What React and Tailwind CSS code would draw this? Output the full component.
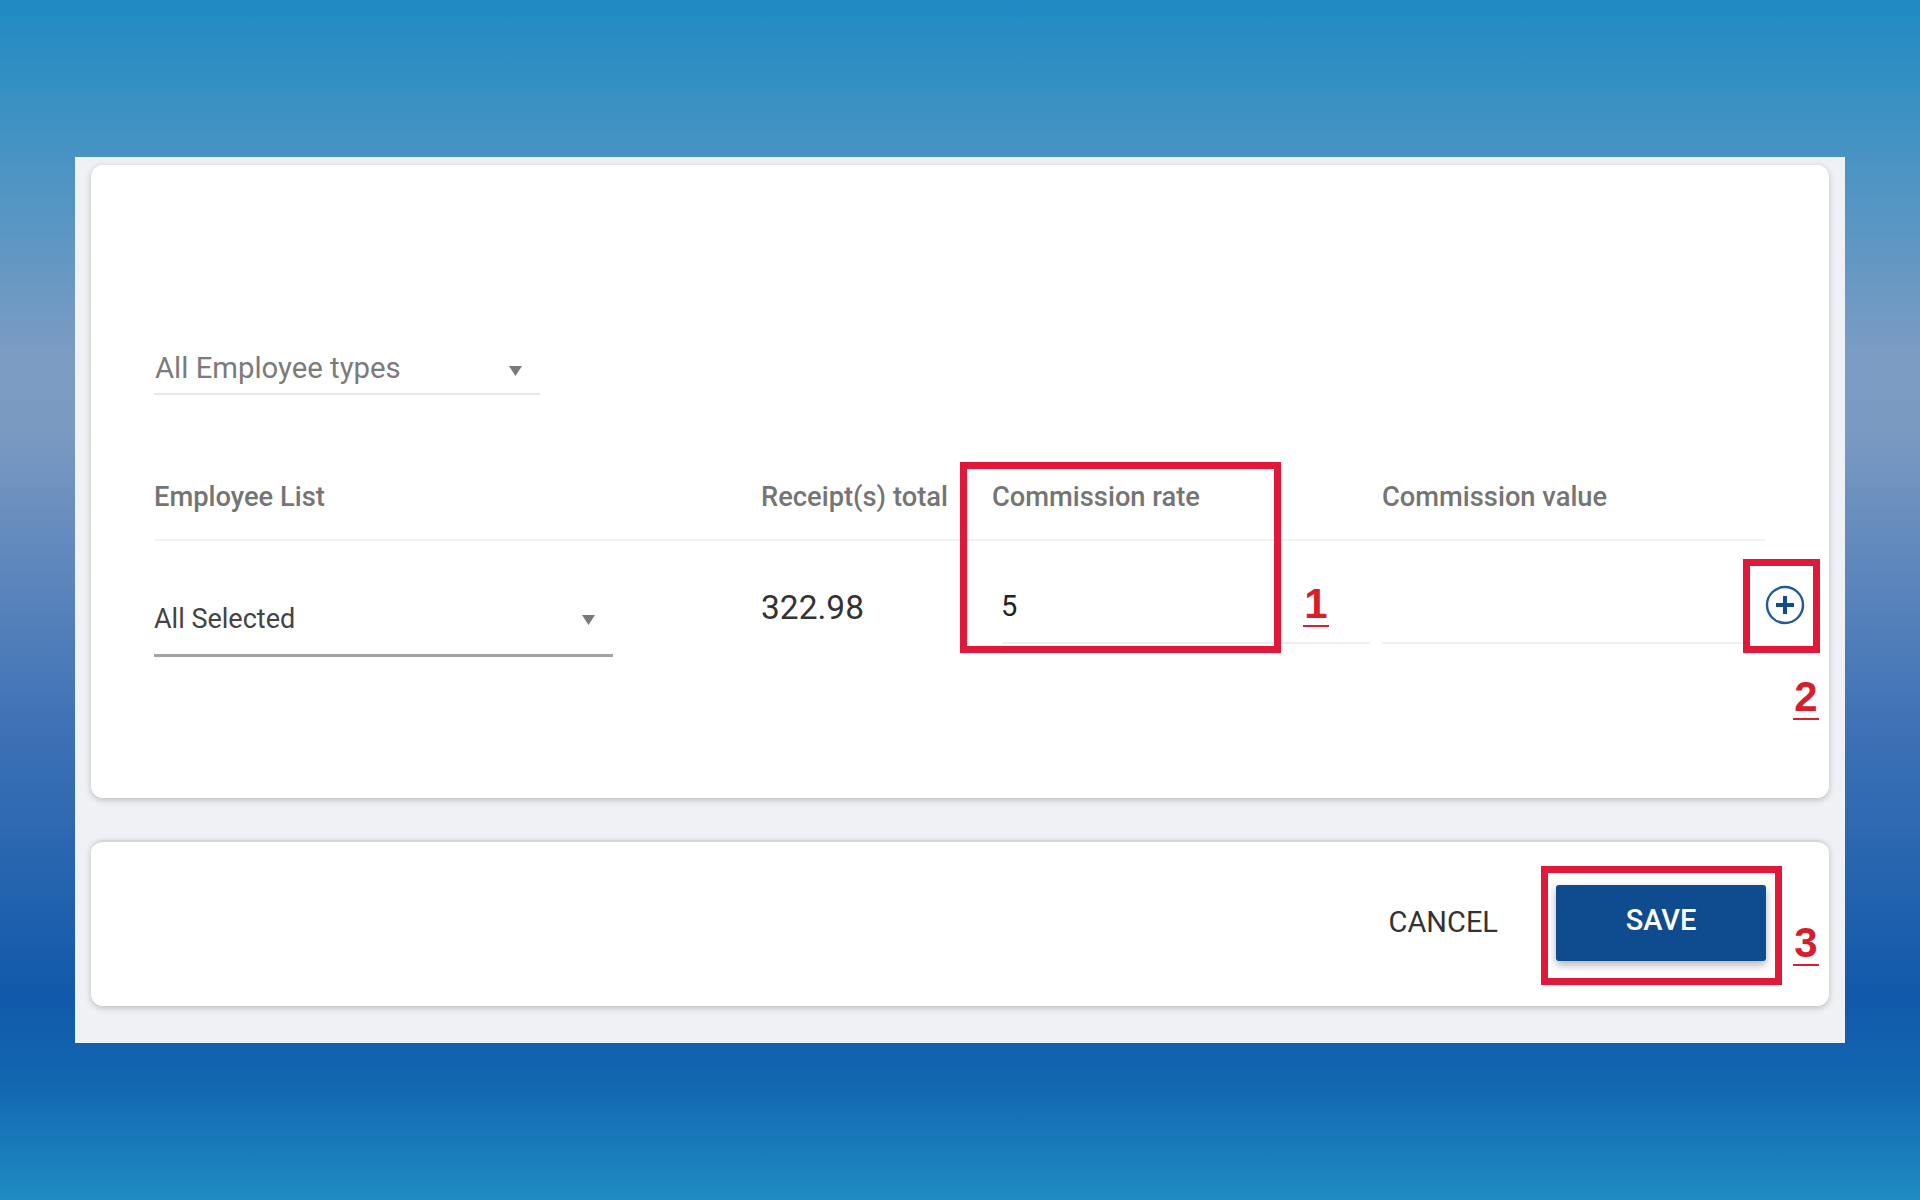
const redBox = 'absolute border-[7px] border-[#e0183a] pointer-events-none';

function Caret({ className }) {
  return (
    <svg width="13" height="10" viewBox="0 0 13 10" className={className}>
      <path d="M0 0h13L6.5 10z" fill="#7a7a7a" />
    </svg>
  );
}

function PlusCircle({ className }) {
  return (
    <svg width="40" height="40" viewBox="0 0 40 40" className={className}>
      <circle cx="20" cy="20" r="18" fill="none" stroke="#1f5a99" strokeWidth="2.4" />
      <path d="M20 11v18M11 20h18" fill="none" stroke="#0f4c8f" strokeWidth="4" />
    </svg>
  );
}

function Marker({ children, className }) {
  return (
    <span className={`absolute w-[26px] border-b-2 border-[#d8202f] text-center text-[42px] leading-[42px] font-bold text-[#d4202c] font-['Liberation_Sans',sans-serif] ${className}`}>
      {children}
    </span>
  );
}

export default function App() {
  return (
    <div className="relative flex h-[1200px] w-[1920px] items-center justify-center overflow-hidden bg-[linear-gradient(180deg,#1f8ac4_0%,#4593c3_12%,#7d9cc3_30%,#7a9ac2_36%,#3f72b6_60%,#1159aa_83%,#1266b0_90%,#1f8bc3_100%)] font-['Roboto',sans-serif]">
      <div className="relative flex h-[886px] w-[1770px] flex-col gap-[42px] bg-[#f0f1f5] px-4 pt-2">
        <div className="h-[633px] rounded-xl bg-white pl-[63px] shadow-[0_2px_6px_rgba(0,0,0,0.22)]">
          <div className="mt-[186px] flex h-[44px] w-[386px] items-center justify-between border-b-2 border-[#e6e7ea] pl-px pr-[18px] pb-1.5">
            <span className="text-[29.3px] text-[#7b7b7b]">All Employee types</span>
            <Caret className="mt-1" />
          </div>

          <div className="mt-[75px] flex h-[71px] w-[1612px] items-center border-b-2 border-[#f1f2f4] pb-[14px] text-[27.3px] font-medium text-[#757575]">
            <span className="w-[607px]">Employee List</span>
            <span className="w-[231px] whitespace-nowrap">Receipt(s) total</span>
            <span className="w-[390px]">Commission rate</span>
            <span>Commission value</span>
          </div>

          <div className="flex h-[116px] w-[1660px] items-start">
            <div className="flex h-[116px] w-[459px] items-center justify-between border-b-[3px] border-[#a3a3a3] pt-[43px] pr-[18px] text-[27px] text-[#444444]">
              <span>All Selected</span>
              <Caret className="mt-0.5" />
            </div>
            <span className="ml-[148px] mt-[45px] w-[241px] text-[33.5px] leading-[44px] text-[#333333]">322.98</span>
            <div className="flex h-[103px] w-[368px] items-center border-b-2 border-[#eeeff1] pt-[31px] text-[29px] text-[#222222]">
              <span className="-ml-px">5</span>
            </div>
            <div className="ml-3 h-[103px] w-[363px] border-b-2 border-[#eeeff1]"></div>
            <PlusCircle className="ml-5 mt-[44px] shrink-0" />
          </div>
        </div>

        <div className="flex h-[166px] items-center justify-end rounded-xl border-t-2 border-[#d5d7db] bg-white pr-[63px] pb-0.5 shadow-[0_2px_6px_rgba(0,0,0,0.22)]">
          <span className="mr-[58px] text-[29px] text-[#333333]">CANCEL</span>
          <button className="h-[76px] w-[210px] rounded-[3px] bg-[#0f4c8f] pb-1 text-[29px] font-medium text-white shadow-[0_4px_8px_rgba(0,0,0,0.3)]">
            SAVE
          </button>
        </div>

        <div className={`${redBox} left-[885px] top-[305px] h-[191px] w-[321px]`}></div>
        <div className={`${redBox} left-[1668px] top-[402px] h-[94px] w-[77px]`}></div>
        <div className={`${redBox} left-[1466px] top-[709px] h-[119px] w-[241px]`}></div>
        <Marker className="left-[1228px] top-[426px]">1</Marker>
        <Marker className="left-[1718px] top-[519px]">2</Marker>
        <Marker className="left-[1718px] top-[765px]">3</Marker>
      </div>
    </div>
  );
}
